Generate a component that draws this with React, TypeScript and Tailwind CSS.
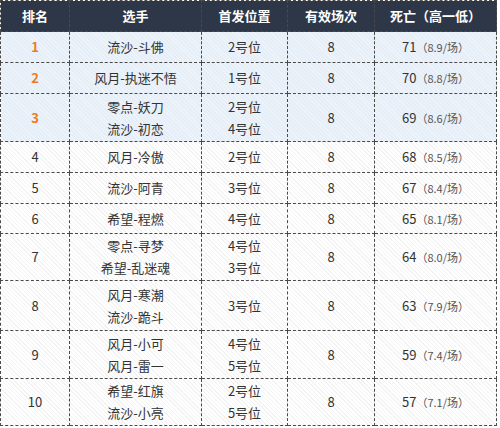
import React from 'react';

type Row = {
    rank: number;
    players: string[];
    positions: string[];
    games: number;
    deaths: number;
    avg: string;
    h: string;
};

const rows: Row[] = [
    { rank: 1, players: ['流沙-斗佛'], positions: ['2号位'], games: 8, deaths: 71, avg: '8.9', h: 'h-[31px]' },
    { rank: 2, players: ['风月-执迷不悟'], positions: ['1号位'], games: 8, deaths: 70, avg: '8.8', h: 'h-[31px]' },
    { rank: 3, players: ['零点-妖刀', '流沙-初恋'], positions: ['2号位', '4号位'], games: 8, deaths: 69, avg: '8.6', h: 'h-[48px]' },
    { rank: 4, players: ['风月-冷傲'], positions: ['2号位'], games: 8, deaths: 68, avg: '8.5', h: 'h-[31px]' },
    { rank: 5, players: ['流沙-阿青'], positions: ['3号位'], games: 8, deaths: 67, avg: '8.4', h: 'h-[31px]' },
    { rank: 6, players: ['希望-程燃'], positions: ['4号位'], games: 8, deaths: 65, avg: '8.1', h: 'h-[30px]' },
    { rank: 7, players: ['零点-寻梦', '希望-乱迷魂'], positions: ['4号位', '3号位'], games: 8, deaths: 64, avg: '8.0', h: 'h-[47px]' },
    { rank: 8, players: ['风月-寒潮', '流沙-跪斗'], positions: ['3号位'], games: 8, deaths: 63, avg: '7.9', h: 'h-[50px]' },
    { rank: 9, players: ['风月-小可', '风月-雷一'], positions: ['4号位', '5号位'], games: 8, deaths: 59, avg: '7.4', h: 'h-[48px]' },
    { rank: 10, players: ['希望-红旗', '流沙-小亮'], positions: ['2号位', '5号位'], games: 8, deaths: 57, avg: '7.1', h: 'h-[47px]' },
];

// faint diagonal hatching, like the source image
const blueBg =
    'bg-[repeating-linear-gradient(45deg,#e6eef8_0px,#e6eef8_2px,#eef4fa_2px,#eef4fa_3px)]';
const whiteBg =
    'bg-[repeating-linear-gradient(45deg,#ffffff_0px,#ffffff_2px,#f3f3f3_2px,#f3f3f3_3px)]';

const cell = 'border border-dashed border-[#4a4a4a] text-center align-middle p-0';

export default function App() {
    return (
        <div className="w-[500px] h-[428px] bg-white font-['Noto_Sans_CJK_SC','Noto_Sans',sans-serif] text-[13px] text-[#333]">
            <table className="w-[496px] border-collapse table-fixed">
                <colgroup>
                    <col className="w-[69px]" />
                    <col className="w-[132px]" />
                    <col className="w-[86px]" />
                    <col className="w-[87px]" />
                    <col className="w-[122px]" />
                </colgroup>
                <thead>
                    <tr className="h-[31px] bg-[#2d3748] text-white font-bold">
                        <th className={cell}>排名</th>
                        <th className={cell}>选手</th>
                        <th className={cell}>首发位置</th>
                        <th className={cell}>有效场次</th>
                        <th className={cell}>死亡（高一低）</th>
                    </tr>
                </thead>
                <tbody>
                    {rows.map((r) => (
                        <tr key={r.rank} className={`${r.h} ${r.rank <= 3 ? blueBg : whiteBg}`}>
                            <td className={`${cell} ${r.rank <= 3 ? 'text-[#f07a22] font-semibold' : ''}`}>{r.rank}</td>
                            <td className={`${cell} leading-[22px]`}>
                                {r.players.map((p) => (
                                    <div key={p}>{p}</div>
                                ))}
                            </td>
                            <td className={`${cell} leading-[22px]`}>
                                {r.positions.map((p, i) => (
                                    <div key={i}>{p}</div>
                                ))}
                            </td>
                            <td className={cell}>{r.games}</td>
                            <td className={cell}>
                                {r.deaths}
                                <span className="text-[11px] text-[#555]">（{r.avg}/场）</span>
                            </td>
                        </tr>
                    ))}
                </tbody>
            </table>
        </div>
    );
}
